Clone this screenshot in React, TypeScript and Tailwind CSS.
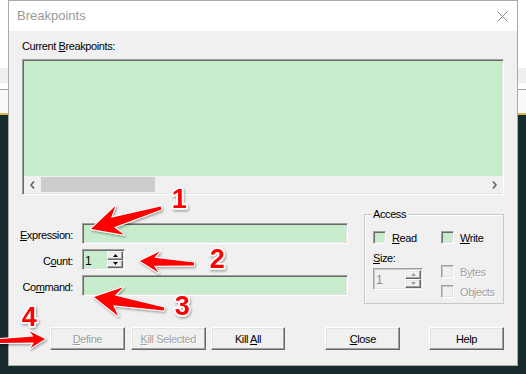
import React from "react";

const sunken =
  "border border-t-[#a0a0a0] border-l-[#a0a0a0] border-r-white border-b-white shadow-[inset_1px_1px_0_#696969,inset_-1px_-1px_0_#e3e3e3]";
const sunkenDisabled =
  "border border-t-[#a0a0a0] border-l-[#a0a0a0] border-r-white border-b-white shadow-[inset_1px_1px_0_#c8c8c8,inset_-1px_-1px_0_#e3e3e3]";
const raised =
  "border border-t-white border-l-white border-r-[#696969] border-b-[#696969] shadow-[inset_-1px_-1px_0_#a0a0a0,inset_1px_1px_0_#e3e3e3]";

function Mn({ children }: { children: React.ReactNode }) {
  return <span className="underline underline-offset-[1px] decoration-1">{children}</span>;
}

function arrowPts(tx: number, ty: number, sx: number, sy: number, hl: number, hw: number, nw: number, tw: number) {
  const dx = sx - tx;
  const dy = sy - ty;
  const L = Math.hypot(dx, dy);
  const ux = dx / L;
  const uy = dy / L;
  const nx = -uy;
  const ny = ux;
  const p = (a: number, b: number) => `${(tx + ux * a + nx * b).toFixed(1)},${(ty + uy * a + ny * b).toFixed(1)}`;
  return [p(0, 0), p(hl, hw / 2), p(hl * 0.75, nw / 2), p(L, tw / 2), p(L, -tw / 2), p(hl * 0.75, -nw / 2), p(hl, -hw / 2)].join(" ");
}

function Spin({ disabled }: { disabled?: boolean }) {
  const c = disabled ? "#a0a0a0" : "#000";
  return (
    <div className="flex flex-col w-[16px] h-full">
      <div className={`flex-1 flex items-center justify-center bg-[#f0f0f0] ${raised}`}>
        <svg width="5" height="3" viewBox="0 0 5 3">
          <polygon points="2.5,0 5,3 0,3" fill={c} />
        </svg>
      </div>
      <div className={`flex-1 flex items-center justify-center bg-[#f0f0f0] ${raised}`}>
        <svg width="5" height="3" viewBox="0 0 5 3">
          <polygon points="0,0 5,0 2.5,3" fill={c} />
        </svg>
      </div>
    </div>
  );
}

function Check({ label, disabled }: { label: React.ReactNode; disabled?: boolean }) {
  return (
    <div className="flex items-center h-[13px]">
      <div className={`w-[13px] h-[13px] ${disabled ? "bg-[#f0f0f0] " + sunkenDisabled : "bg-[#c7edcc] " + sunken}`} />
      <span
        className={`ml-[6px] leading-[14px] ${disabled ? "text-[#a0a0a0] [text-shadow:1px_1px_0_#fff]" : "text-black"}`}
      >
        {label}
      </span>
    </div>
  );
}

function Btn({ children, disabled, className }: { children: React.ReactNode; disabled?: boolean; className?: string }) {
  return (
    <div
      className={`w-[75px] h-[23px] flex items-center justify-center bg-[#f0f0f0] ${raised} ${
        disabled ? "text-[#a0a0a0] [text-shadow:1px_1px_0_#fff]" : "text-black"
      } ${className ?? ""}`}
    >
      <span className="leading-[14px]">{children}</span>
    </div>
  );
}

export default function App() {
  return (
    <div className="relative w-[526px] h-[374px] overflow-hidden font-['Liberation_Sans',Arial,sans-serif] text-[11px] tracking-[-0.4px] text-black">
      {/* desktop / background app */}
      <div className="flex flex-col w-full h-full">
        <div className="h-[68px] bg-white" />
        <div className="h-[15px] bg-[#efefef]" />
        <div className="h-[6px] bg-white" />
        <div className="h-[1px] bg-[#a0a0a0]" />
        <div className="h-[23px] bg-[#fafafa]" />
        <div className="h-[2px] bg-[#e2b24a]" />
        <div className="flex-1 bg-[#172a2c]" />
      </div>

      {/* dialog window */}
      <div className="absolute left-[8px] top-0 w-[510px] h-[366px] border border-[#aaaaaa] bg-[#f0f0f0] flex flex-col">
        <div className="h-[30px] bg-white flex items-center justify-between pl-[8px] pr-[9px]">
          <span className="font-['Liberation_Sans',sans-serif] text-[13px] tracking-normal text-[#9a9a9a]">Breakpoints</span>
          <svg width="11" height="11" viewBox="0 0 11 11">
            <path d="M0.5 0.5 L10.5 10.5 M10.5 0.5 L0.5 10.5" stroke="#8a8a8a" strokeWidth="1" />
          </svg>
        </div>

        <div className="flex flex-col px-[13px] pt-[8px]">
          <div className="leading-[14px]">
            Current <Mn>B</Mn>reakpoints:
          </div>

          {/* list box */}
          <div className={`mt-[6px] h-[136px] flex flex-col bg-[#c7edcc] ${sunken}`}>
            <div className="flex-1" />
            <div className="h-[17px] flex bg-[#f0f0f0] ml-[1px] mb-[1px]">
              <div className="w-[17px] flex items-center justify-center">
                <svg width="5" height="8" viewBox="0 0 5 8">
                  <path d="M4 0.5 L1 4 L4 7.5" stroke="#606060" strokeWidth="1.6" fill="none" />
                </svg>
              </div>
              <div className="flex-1 flex items-center">
                <div className="w-[114px] h-[15px] bg-[#cdcdcd]" />
              </div>
              <div className="w-[17px] flex items-center justify-center">
                <svg width="5" height="8" viewBox="0 0 5 8">
                  <path d="M1 0.5 L4 4 L1 7.5" stroke="#606060" strokeWidth="1.6" fill="none" />
                </svg>
              </div>
            </div>
          </div>

          {/* form + access */}
          <div className="mt-[12px] flex">
            <div className="w-[326px] flex flex-col pt-[16px] gap-[5px]">
              <div className="flex h-[21px] items-center">
                <div className="-ml-[5px] w-[56px] text-right pt-[2px] leading-[14px]">
                  <Mn>E</Mn>xpression:
                </div>
                <div className={`ml-[9px] w-[266px] h-[21px] bg-[#c7edcc] ${sunken}`} />
              </div>
              <div className="flex h-[21px] items-center">
                <div className="-ml-[5px] w-[56px] text-right pt-[2px] leading-[14px]">
                  C<Mn>o</Mn>unt:
                </div>
                <div className={`ml-[9px] w-[43px] h-[21px] bg-[#c7edcc] flex items-stretch pl-[2px] pr-[1px] py-[1px] ${sunken}`}>
                  <span className="flex-1 text-[12px] leading-[18px] pt-[1px]">1</span>
                  <Spin />
                </div>
              </div>
              <div className="flex h-[21px] items-center">
                <div className="-ml-[5px] w-[56px] text-right pt-[2px] leading-[14px]">
                  Co<Mn>m</Mn>mand:
                </div>
                <div className={`ml-[9px] w-[266px] h-[21px] bg-[#c7edcc] ${sunken}`} />
              </div>
            </div>

            <div className="ml-[16px] w-[140px] pt-[7px]">
              <div className="relative h-[90px] border border-[#c8c8c8] shadow-[inset_1px_1px_0_#fff] flex pl-[8px] pt-[16px]">
                <span className="absolute -top-[8px] left-[6px] px-[2px] bg-[#f0f0f0] leading-[14px]">Access</span>
                <div className="w-[68px] flex flex-col">
                  <Check label={<><Mn>R</Mn>ead</>} />
                  <div className="mt-[7px] leading-[14px]">
                    <Mn>S</Mn>ize:
                  </div>
                  <div className={`mt-[3px] w-[50px] h-[22px] bg-[#f0f0f0] flex items-stretch pl-[2px] pr-[1px] py-[1px] ${sunkenDisabled}`}>
                    <span className="flex-1 text-[12px] leading-[18px] pt-[1px] text-[#8a8a8a]">1</span>
                    <Spin disabled />
                  </div>
                </div>
                <div className="flex flex-col">
                  <Check label={<><Mn>W</Mn>rite</>} />
                  <div className="mt-[21px]">
                    <Check disabled label={<>B<Mn>y</Mn>tes</>} />
                  </div>
                  <div className="mt-[7px]">
                    <Check disabled label="Objects" />
                  </div>
                </div>
              </div>
            </div>
          </div>

          {/* buttons */}
          <div className="mt-[23px] flex">
            <Btn disabled className="ml-[28px]">
              <Mn>D</Mn>efine
            </Btn>
            <Btn disabled className="ml-[6px]">
              <Mn>K</Mn>ill Selected
            </Btn>
            <Btn className="ml-[5px]">
              Kill <Mn>A</Mn>ll
            </Btn>
            <Btn className="ml-[40px]">
              <Mn>C</Mn>lose
            </Btn>
            <Btn className="ml-[29px]">Help</Btn>
          </div>
        </div>
      </div>

      {/* annotations */}
      <svg className="absolute left-0 top-0 pointer-events-none" width="526" height="374" viewBox="0 0 526 374">
        <defs>
          <filter id="sh" x="-20%" y="-20%" width="140%" height="140%">
            <feDropShadow dx="1" dy="1.5" stdDeviation="1.2" floodColor="#000" floodOpacity="0.35" />
          </filter>
        </defs>
        <g filter="url(#sh)" fill="#ff0000" stroke="#ffffff" strokeWidth="2" strokeLinejoin="round" style={{ paintOrder: "stroke" }}>
          <polygon points={arrowPts(91, 229, 161, 208, 30, 30, 10, 3)} />
          <polygon points={arrowPts(140, 261, 194, 264, 19, 21, 8, 3)} />
          <polygon points={arrowPts(94, 297, 164, 309, 27, 29, 10, 3)} />
          <polygon points={arrowPts(45, 339, 0, 341, 15, 17, 6, 4)} />
        </g>
        <g
          filter="url(#sh)"
          fill="#ff0000"
          stroke="#ffffff"
          strokeWidth="3.5"
          strokeLinejoin="round"
          fontFamily="'Liberation Sans', Arial, sans-serif"
          fontWeight="bold"
          fontSize="27"
          textAnchor="middle"
          style={{ paintOrder: "stroke" }}
        >
          <text x="179" y="208">1</text>
          <text x="217" y="268">2</text>
          <text x="182" y="315">3</text>
          <text x="29" y="326">4</text>
        </g>
      </svg>
    </div>
  );
}
